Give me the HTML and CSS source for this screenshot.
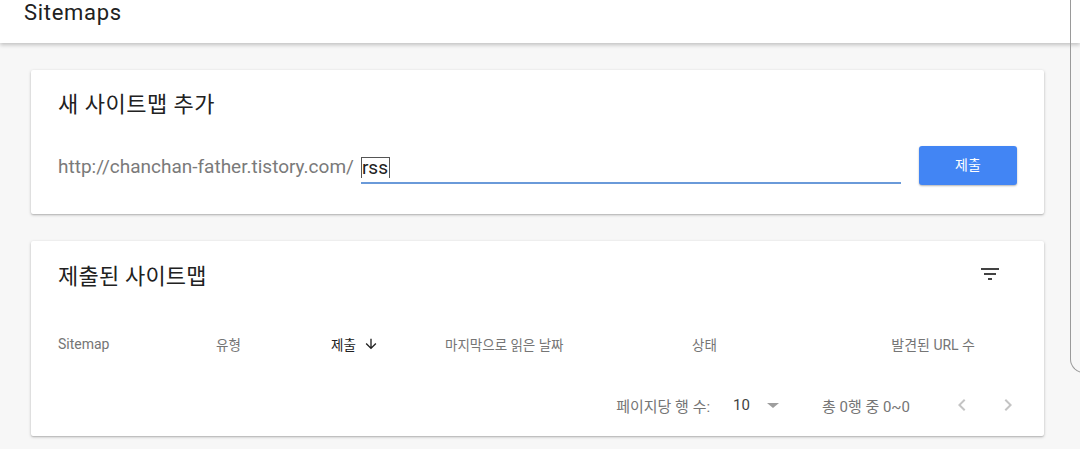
FILE: index.html
```html
<!DOCTYPE html>
<html lang="ko">
<head>
<meta charset="utf-8">
<title>Sitemaps</title>
<link rel="stylesheet" href="styles.css">
</head>
<body>
<header class="topbar">
  <h1 class="page-title">Sitemaps</h1>
</header>
<main class="content">
  <section class="card add-card">
    <h2 class="card-title">새 사이트맵 추가</h2>
    <div class="add-row">
      <span class="prefix">http://chanchan-father.tistory.com/</span>
      <div class="field"><span class="typed">rss</span></div>
      <button class="submit-btn">제출</button>
    </div>
  </section>
  <section class="card list-card">
    <div class="list-head">
      <h2 class="card-title big">제출된 사이트맵</h2>
      <svg class="filter-icon" width="24" height="24" viewBox="0 0 24 24"><path d="M3 6h18v2H3zM6 11h12v2H6zM10 16h4v2h-4z" fill="#424242"/></svg>
    </div>
    <div class="table-head">
      <span class="col c-sitemap">Sitemap</span>
      <span class="col c-type">유형</span>
      <span class="col c-submit">제출 <svg class="arrow" width="16" height="16" viewBox="0 0 24 24"><path d="M20 12l-1.41-1.41L13 16.17V4h-2v12.17l-5.58-5.59L4 12l8 8 8-8z" fill="#212121"/></svg></span>
      <span class="col c-read">마지막으로 읽은 날짜</span>
      <span class="col c-status">상태</span>
      <span class="col c-urls">발견된 URL 수</span>
    </div>
    <div class="table-foot">
      <span class="rows-label">페이지당 행 수:</span>
      <span class="rows-value">10</span>
      <svg class="dropdown" width="12" height="12" viewBox="0 0 12 12"><path d="M0 4h12L6 9z" fill="#9e9e9e"/></svg>
      <span class="range">총 0행 중 0~0</span>
      <svg class="chev prev" width="24" height="24" viewBox="0 0 24 24"><path d="M15.41 7.41L14 6l-6 6 6 6 1.41-1.41L10.83 12z" fill="#c4c4c4"/></svg>
      <svg class="chev next" width="24" height="24" viewBox="0 0 24 24"><path d="M8.59 16.59L10 18l6-6-6-6-1.41 1.41L13.17 12z" fill="#c4c4c4"/></svg>
    </div>
  </section>
</main>
<div class="frame-edge"></div>
</body>
</html>
```
FILE: styles.css
```css
* { box-sizing: border-box; }
html, body { margin: 0; padding: 0; }
body {
  width: 1080px;
  height: 449px;
  overflow: hidden;
  background: #f7f7f7;
  font-family: Roboto, "Noto Sans CJK KR", "Noto Sans", sans-serif;
  color: #212121;
  position: relative;
}
.topbar {
  height: 43px;
  background: #fff;
  box-shadow: 0 2px 4px rgba(0,0,0,0.22);
  padding: 0 0 0 24px;
  display: flex;
  align-items: flex-start;
  position: relative;
  z-index: 1;
}
.page-title {
  margin: 0;
  font-size: 22px;
  font-weight: 400;
  letter-spacing: 0.7px;
  line-height: 26px;
  color: #212121;
}
.content {
  padding: 27px 36px 0 31px;
  display: flex;
  flex-direction: column;
  gap: 27px;
}
.card {
  background: #fff;
  box-shadow: 0 1px 3px rgba(0,0,0,0.25), 0 1px 1px rgba(0,0,0,0.08);
  border-radius: 2px;
}
.add-card {
  height: 144px;
  padding: 21px 27px 0 27px;
}
.card-title {
  margin: 0;
  font-size: 22px;
  font-weight: 400;
  line-height: 28px;
  letter-spacing: 0.5px;
  color: #212121;
}
.card-title.big { font-size: 22px; letter-spacing: 0.2px; }
.add-row {
  margin-top: 27px;
  height: 39px;
  display: flex;
  align-items: center;
}
.prefix {
  font-size: 19px;
  color: #7a7a7a;
  margin-top: 2px;
  white-space: nowrap;
}
.field {
  flex: 1;
  margin-left: 7px;
  height: 30px;
  border-bottom: 2px solid #6a9ad9;
  display: flex;
  align-items: flex-end;
  margin-top: 6px;
}
.typed {
  font-size: 19px;
  line-height: 20px;
  color: #212121;
  border: 1px solid #555;
  border-bottom: none;
  padding: 0 1px 0 0;
  margin-bottom: 4px;
}
.submit-btn {
  margin-left: 18px;
  width: 98px;
  height: 39px;
  flex: none;
  background: #4285f4;
  color: #fff;
  border: none;
  border-radius: 3px;
  font-family: Roboto, "Noto Sans CJK KR", sans-serif;
  font-size: 14px;
  box-shadow: 0 1px 2px rgba(0,0,0,0.3);
  padding: 0 0 4px 0;
}
.list-card {
  height: 195px;
  padding: 0 42px 0 27px;
  display: flex;
  flex-direction: column;
}
.list-head {
  height: 66px;
  display: flex;
  align-items: center;
  justify-content: space-between;
  padding-top: 6px;
}
.filter-icon { display: block; margin-top: -6px; }
.table-head {
  margin-top: 17px;
  height: 40px;
  display: flex;
  align-items: center;
  font-size: 13.5px;
  color: #757575;
}
.col { white-space: nowrap; }
.c-sitemap { width: 158px; font-size: 14px; }
.c-type { width: 115px; }
.c-submit { width: 114px; color: #212121; display: flex; align-items: center; gap: 7px; }
.c-read { width: 247px; }
.c-status { flex: 1; }
.c-urls { margin-right: 27px; font-size: 14px; }
.arrow { display: block; }
.table-foot {
  margin-top: 21px;
  height: 40px;
  display: flex;
  align-items: center;
  justify-content: flex-end;
  font-size: 15px;
  color: #757575;
  margin-right: -18px;
}
.rows-value { margin-left: 23px; color: #424242; font-size: 15px; }
.dropdown { margin-left: 17px; display: block; }
.range { margin-left: 43px; }
.chev { display: block; }
.chev.prev { margin-left: 40px; }
.chev.next { margin-left: 22px; }
.frame-edge {
  position: absolute;
  left: 1070px;
  top: -20px;
  width: 40px;
  height: 393px;
  border-left: 1px solid #9a9a9a;
  border-bottom: 1px solid #9a9a9a;
  border-bottom-left-radius: 14px;
  z-index: 2;
}
```
